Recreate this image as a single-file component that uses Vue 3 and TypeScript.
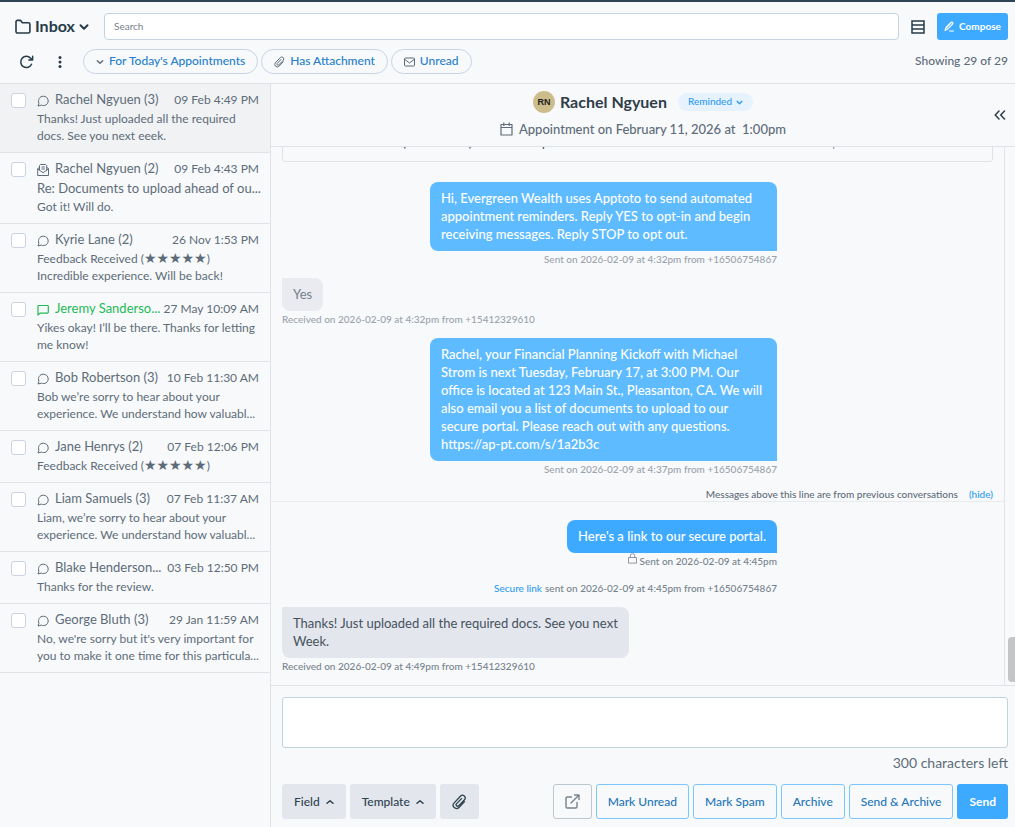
<script setup lang="ts">
import { nextTick, onMounted, ref } from 'vue'

type IconKind = 'chat' | 'mail' | 'sms'

interface Conversation {
  name: string
  date: string
  icon: IconKind
  subject?: string
  rating?: string
  preview: string
  active?: boolean
  unread?: boolean
}

const conversations = ref<Conversation[]>([
  { name: 'Rachel Ngyuen (3)', date: '09 Feb 4:49 PM', icon: 'chat', preview: 'Thanks! Just uploaded all the required\ndocs. See you next eeek.', active: true },
  { name: 'Rachel Ngyuen (2)', date: '09 Feb 4:43 PM', icon: 'mail', subject: 'Re: Documents to upload ahead of ou...', preview: 'Got it! Will do.' },
  { name: 'Kyrie Lane (2)', date: '26 Nov 1:53 PM', icon: 'chat', rating: '★★★★★', preview: 'Incredible experience. Will be back!' },
  { name: 'Jeremy Sanderso...', date: '27 May 10:09 AM', icon: 'sms', preview: 'Yikes okay! I’ll be there. Thanks for letting\nme know!', unread: true },
  { name: 'Bob Robertson (3)', date: '10 Feb 11:30 AM', icon: 'chat', preview: 'Bob we’re sorry to hear about your\nexperience. We understand how valuabl...' },
  { name: 'Jane Henrys (2)', date: '07 Feb 12:06 PM', icon: 'chat', rating: '★★★★★', preview: '' },
  { name: 'Liam Samuels (3)', date: '07 Feb 11:37 AM', icon: 'chat', preview: 'Liam, we’re sorry to hear about your\nexperience. We understand how valuabl...' },
  { name: 'Blake Henderson...', date: '03 Feb 12:50 PM', icon: 'chat', preview: 'Thanks for the review.' },
  { name: 'George Bluth (3)', date: '29 Jan 11:59 AM', icon: 'chat', preview: "No, we're sorry but it's very important for\nyou to make it one time for this particula..." },
])

const search = ref('')
const draft = ref('')
const thread = ref<HTMLElement | null>(null)

onMounted(async () => {
  await nextTick()
  if (thread.value) thread.value.scrollTop = thread.value.scrollHeight
})
</script>

<template>
  <div class="app">
    <header class="topbar">
      <div class="row search-row">
        <button class="plain inbox" type="button">
          <svg width="16" height="16" viewBox="0 0 16 16" fill="none" stroke="currentColor" stroke-width="1.6" stroke-linejoin="round"><path d="M1 12.6V2.8C1 2 1.6 1.4 2.4 1.4h3.2l1.800 2.400h6c.8 0 1.500.6 1.500 1.400v7.400c0 .8-.7 1.400-1.500 1.400h-11C1.600 14 1 13.400 1 12.600z" /></svg>
          <span>Inbox</span>
          <svg width="10" height="10" viewBox="0 0 10 10" fill="none" stroke="currentColor" stroke-width="2" stroke-linecap="round" stroke-linejoin="round"><path d="M1.500 3.200 5 6.700l3.500-3.500" /></svg>
        </button>
        <input v-model="search" class="search" type="text" placeholder="Search" aria-label="Search" />
        <button class="plain layout" type="button" aria-label="Change layout">
          <svg width="14" height="14" viewBox="0 0 14 14" fill="none" stroke="currentColor" stroke-width="1.500"><path d="M1 1h12v12H1zM1 5h12M1 9h12" /></svg>
        </button>
        <button class="compose" type="button">
          <svg width="11" height="11" viewBox="0 0 11 11" fill="none" stroke="currentColor" stroke-width="1.100" stroke-linecap="round" stroke-linejoin="round"><path d="M1 9.500 2 6.500 7 1.500c.500-.5 1.100-.5 1.600 0s.5 1.100 0 1.600L3.600 8.100zM2.200 6.800l4.900-4.900M5.500 10h4" /></svg>
          <span>Compose</span>
        </button>
      </div>
      <div class="row filter-row">
        <button class="plain tool" type="button" aria-label="Refresh">
          <svg width="15" height="14" viewBox="0 0 15 14" fill="none" stroke="currentColor" stroke-width="1.500" stroke-linecap="round" stroke-linejoin="round"><path d="M12.500 9.200A5.600 5.600 0 1 1 11.600 3.300L13.400 5M13.600 1.300V5.100H9.800" /></svg>
        </button>
        <button class="plain tool more" type="button" aria-label="More">
          <svg width="4" height="14" viewBox="0 0 4 14" fill="currentColor"><circle cx="2" cy="2.500" r="1.500" /><circle cx="2" cy="7" r="1.500" /><circle cx="2" cy="11.500" r="1.500" /></svg>
        </button>
        <div class="pills">
          <button class="pill" type="button">
            <svg width="8" height="8" viewBox="0 0 8 8" fill="none" stroke="currentColor" stroke-width="1.400" stroke-linecap="round" stroke-linejoin="round"><path d="M1.300 2.700 4 5.300l2.700-2.600" /></svg>
            <span>For Today's Appointments</span>
          </button>
          <button class="pill" type="button">
            <svg width="11" height="12" viewBox="0 0 22 24" fill="none" stroke="currentColor" stroke-width="2" stroke-linecap="round" stroke-linejoin="round"><path d="M18.500 11.500 10.200 20.300a5 5 0 0 1-7.200-7L12.700 3.100a4 4 0 0 1 5.800 5.500L9.600 17.800a2.200 2.200 0 0 1-3.200-3L14 6.900" /></svg>
            <span>Has Attachment</span>
          </button>
          <button class="pill" type="button">
            <svg width="11" height="10" viewBox="0 0 11 10" fill="none" stroke="currentColor"><rect x=".5" y="1" width="10" height="8" rx="1" /><path d="m1 2.500 4.500 3.500L10 2.500" /></svg>
            <span>Unread</span>
          </button>
        </div>
        <span class="count">Showing 29 of 29</span>
      </div>
    </header>

    <main class="body">
      <ul class="list">
        <li v-for="(c, i) in conversations" :key="i" class="item" :class="{ active: c.active, unread: c.unread }">
          <input class="check" type="checkbox" :aria-label="'Select ' + c.name" />
          <div class="item-body">
            <div class="item-head">
              <svg v-if="c.icon === 'chat'" class="kind" width="12" height="12" viewBox="0 0 12 12" fill="none" stroke="currentColor" stroke-linejoin="round"><path d="M1 11 1.900 8.300C.7 4.600 2.600 1.300 6.300 1.200c2.800 0 4.900 2 4.900 4.700 0 3.500-3.500 5.700-6.900 4.200z" /></svg>
              <svg v-else-if="c.icon === 'mail'" class="kind" width="12" height="12" viewBox="0 0 12 12" fill="none" stroke="currentColor" stroke-linejoin="round"><path d="M2.500 3.500.7 4.500v7h10.800v-7L9.700 3.500M.7 5l5.400 3.700L11.500 5M2.500 6V1.500l1-1h5.200l1 1V6M4.500 3h3.300M4.500 5h3.300" /></svg>
              <svg v-else class="kind" width="12" height="12" viewBox="0 0 12 12" fill="none" stroke="currentColor" stroke-width="1.200" stroke-linejoin="round"><path d="M1 11V2.300c0-.5.3-.8.8-.8h8.700c.5 0 .8.3.8.8v6c0 .5-.3.8-.8.800H3z" /></svg>
              <span class="name">{{ c.name }}</span>
              <time class="date">{{ c.date }}</time>
            </div>
            <p v-if="c.subject" class="subject">{{ c.subject }}</p>
            <p v-if="c.rating">Feedback Received (<span class="stars">{{ c.rating }}</span>)</p>
            <p v-if="c.preview" class="preview">{{ c.preview }}</p>
          </div>
        </li>
      </ul>

      <section class="conversation">
        <div class="conv-head">
          <div class="conv-info">
            <div class="person">
              <span class="avatar">RN</span>
              <h1>Rachel Ngyuen</h1>
              <button class="status" type="button">
                <span>Reminded</span>
                <svg width="7" height="7" viewBox="0 0 8 8" fill="none" stroke="currentColor" stroke-width="1.600" stroke-linecap="round" stroke-linejoin="round"><path d="M1.300 2.700 4 5.300l2.700-2.600" /></svg>
              </button>
            </div>
            <div class="appointment">
              <svg width="13" height="14" viewBox="0 0 13 14" fill="none" stroke="currentColor" stroke-width="1.200" stroke-linejoin="round"><path d="M1 2.500h11V13H1zM1 5.500h11M3.800.5v3.500M9.200.5v3.500" /></svg>
              <span>Appointment on February 11, 2026 at &nbsp;1:00pm</span>
            </div>
          </div>
          <button class="plain collapse" type="button" aria-label="Expand details">
            <svg width="12" height="10" viewBox="0 0 12 10" fill="none" stroke="currentColor" stroke-width="1.500" stroke-linecap="round" stroke-linejoin="round"><path d="M5 1 1.200 5 5 9M10.500 1 6.700 5l3.800 4" /></svg>
          </button>
        </div>

        <div class="thread-wrap">
          <div ref="thread" class="thread">
            <div class="event">
              <span>Feedback Received (<span class="stars">★★★★★</span>) Incredible experience. Will be back!</span>
              <span class="event-meta">Received on 2026-02-09 at 4:31pm from +15412329610</span>
            </div>

            <div class="msg sent old">
              <p class="bubble">Hi, Evergreen Wealth uses Apptoto to send automated<br />appointment reminders. Reply YES to opt-in and begin<br />receiving messages. Reply STOP to opt out.</p>
              <small>Sent on 2026-02-09 at 4:32pm from +16506754867</small>
            </div>
            <div class="msg received old">
              <p class="bubble">Yes</p>
              <small>Received on 2026-02-09 at 4:32pm from +15412329610</small>
            </div>
            <div class="msg sent old">
              <p class="bubble">Rachel, your Financial Planning Kickoff with Michael<br />Strom is next Tuesday, February 17, at 3:00 PM. Our<br />office is located at 123 Main St., Pleasanton, CA. We will<br />also email you a list of documents to upload to our<br />secure portal. Please reach out with any questions.<br />https://ap-pt.com/s/1a2b3c</p>
              <small>Sent on 2026-02-09 at 4:37pm from +16506754867</small>
            </div>
            <div class="divider">
              <span>Messages above this line are from previous conversations</span>
              <a href="#">(hide)</a>
            </div>
            <div class="msg sent current">
              <p class="bubble">Here's a link to our secure portal.</p>
              <small>
                <svg width="9" height="11" viewBox="0 0 9 11" fill="none" stroke="currentColor" stroke-width=".8"><path d="M.5 4.500h8v5.600h-8zM2.300 4.500V2.800a2.200 2.200 0 0 1 4.400 0v1.700" /></svg>
                Sent on 2026-02-09 at 4:45pm
              </small>
            </div>
            <div class="msg sent">
              <small><a href="#">Secure link</a> sent on 2026-02-09 at 4:45pm from +16506754867</small>
            </div>
            <div class="msg received">
              <p class="bubble">Thanks! Just uploaded all the required docs. See you next<br />Week.</p>
              <small>Received on 2026-02-09 at 4:49pm from +15412329610</small>
            </div>
          </div>
          <div class="track"><div class="thumb"></div></div>
        </div>

        <form class="composer" @submit.prevent>
          <textarea v-model="draft" aria-label="Message"></textarea>
          <div class="chars">300 characters left</div>
          <div class="actions">
            <button class="btn grey" type="button">
              <span>Field</span>
              <svg width="8" height="8" viewBox="0 0 8 8" fill="none" stroke="currentColor" stroke-width="1.500" stroke-linecap="round" stroke-linejoin="round"><path d="M1 5.300 4 2.700l3 2.600" /></svg>
            </button>
            <button class="btn grey" type="button">
              <span>Template</span>
              <svg width="8" height="8" viewBox="0 0 8 8" fill="none" stroke="currentColor" stroke-width="1.500" stroke-linecap="round" stroke-linejoin="round"><path d="M1 5.300 4 2.700l3 2.600" /></svg>
            </button>
            <button class="btn grey" type="button" aria-label="Attach file">
              <svg width="15" height="16" viewBox="0 0 22 24" fill="none" stroke="currentColor" stroke-width="2" stroke-linecap="round" stroke-linejoin="round"><path d="M18.500 11.500 10.200 20.300a5 5 0 0 1-7.200-7L12.700 3.100a4 4 0 0 1 5.800 5.500L9.600 17.800a2.200 2.200 0 0 1-3.200-3L14 6.900" /></svg>
            </button>
            <span class="spacer"></span>
            <button class="btn open" type="button" aria-label="Open in new window">
              <svg width="15" height="15" viewBox="0 0 15 15" fill="none" stroke="currentColor" stroke-width="1.400" stroke-linecap="round" stroke-linejoin="round"><path d="M6.500 3H2.300C1.500 3 1 3.500 1 4.300v8.400c0 .8.500 1.300 1.300 1.300h8.400c.8 0 1.300-.5 1.300-1.300V8.500M6 9l7.500-7.500M9.500 1H14v4.500" /></svg>
            </button>
            <button class="btn outline" type="button">Mark Unread</button>
            <button class="btn outline" type="button">Mark Spam</button>
            <button class="btn outline" type="button">Archive</button>
            <button class="btn outline" type="button">Send &amp; Archive</button>
            <button class="btn primary" type="submit">Send</button>
          </div>
        </form>
      </section>
    </main>
  </div>
</template>

<style>
body {
  margin: 0;
  background: #f8f9fb;
}
</style>

<style scoped>
.app {
  box-sizing: border-box;
  height: 100vh;
  display: flex;
  flex-direction: column;
  border-top: 2px solid #2e4553;
  background: #f8f9fb;
  color: #5d6c78;
  font-family: Lato, "DejaVu Sans", sans-serif;
  font-size: 13px;
}
.app *,
.app *::before {
  box-sizing: border-box;
}
button,
input,
textarea {
  font-family: inherit;
}
button {
  cursor: pointer;
}
svg {
  flex: none;
  display: block;
}
p,
h1 {
  margin: 0;
}
a {
  color: #2c9bf0;
  text-decoration: none;
}
.plain {
  display: flex;
  align-items: center;
  padding: 0;
  border: 0;
  background: none;
  color: #263c4a;
}
.topbar {
  flex: none;
  border-bottom: 1px solid #dfe3e7;
}
.row {
  display: flex;
  align-items: center;
}
.search-row {
  padding: 11px 7px 0 15px;
}
.inbox {
  width: 89px;
  gap: 4px;
  font-size: 16px;
  font-weight: 700;
}
.inbox span,
.pill span,
.compose span,
.status span,
.count,
h1,
.name,
.date {
  padding-bottom: 2px;
}
.search {
  flex: 1;
  min-width: 0;
  height: 27px;
  padding: 0 9px 2px;
  border: 1px solid #c5d3e0;
  border-radius: 4px;
  background: #fff;
  font-size: 10px;
  color: #33424e;
}
.search::placeholder {
  color: #76828c;
  opacity: 1;
}
.layout {
  margin: 0 12px;
}
.compose {
  display: flex;
  align-items: center;
  justify-content: center;
  gap: 4px;
  width: 71px;
  height: 27px;
  padding: 0;
  border: 0;
  border-radius: 3px;
  background: #3eaaff;
  color: #fff;
  font-size: 10px;
  font-weight: 700;
}
.filter-row {
  padding: 9px 7px 9px 19px;
}
.tool {
  width: 39px;
}
.more {
  width: 25px;
}
.pills {
  display: flex;
  flex: 1;
  gap: 3px;
}
.pill {
  display: flex;
  align-items: center;
  gap: 5px;
  height: 25px;
  padding: 0 12px;
  border: 1px solid #c8d4e6;
  border-radius: 13px;
  background: transparent;
  color: #5d6c78;
  font-size: 12px;
  font-weight: 500;
}
.pill span {
  color: #2580cb;
}
.count {
  font-size: 12px;
  font-weight: 500;
}
.body {
  flex: 1;
  min-height: 0;
  display: flex;
}
.list {
  flex: none;
  width: 271px;
  margin: 0;
  padding: 0;
  list-style: none;
  border-right: 1px solid #dfe3e7;
}
.item {
  display: flex;
  gap: 11px;
  padding: 7px 11px 8px;
  border-bottom: 1px solid #dfe3e7;
}
.item.active {
  background: #f1f2f4;
}
.check {
  appearance: none;
  flex: none;
  width: 15px;
  height: 15px;
  margin: 2px 0 0;
  border: 1px solid #c9d3e2;
  border-radius: 3px;
  background: #fff;
}
.item-body {
  flex: 1;
  min-width: 0;
  font-size: 12px;
  line-height: 17px;
  white-space: nowrap;
}
.item-head {
  display: flex;
  align-items: center;
  height: 19px;
}
.kind {
  margin-right: 6px;
}
.name {
  flex: 1;
  font-size: 13px;
}
.subject {
  font-size: 13px;
  line-height: 19px;
}
.preview {
  white-space: pre;
}
.stars {
  font-family: "DejaVu Sans", sans-serif;
  font-size: 14px;
  line-height: 1;
}
.unread .kind,
.unread .name {
  color: #22b957;
}
.conversation {
  flex: 1;
  min-width: 0;
  display: flex;
  flex-direction: column;
}
.conv-head {
  flex: none;
  display: flex;
  align-items: center;
  height: 63px;
  padding-right: 9px;
  border-bottom: 1px solid #dfe3e7;
}
.conv-info {
  flex: 1;
  padding-left: 21px;
}
.person,
.appointment {
  display: flex;
  align-items: center;
  justify-content: center;
}
.person {
  height: 28px;
}
.appointment {
  height: 26px;
  gap: 6px;
  font-size: 13px;
  font-weight: 500;
}
.avatar {
  width: 22px;
  height: 22px;
  border-radius: 50%;
  background: #cdbc8c;
  color: #1d1d1d;
  font: 700 9px/22px "Liberation Sans", sans-serif;
  text-align: center;
}
h1 {
  margin: 0 11px 0 5px;
  color: #2f3d49;
  font-size: 16px;
  font-weight: 700;
}
.status {
  display: flex;
  align-items: center;
  gap: 4px;
  height: 18px;
  padding: 0 10px;
  border: 0;
  border-radius: 9px;
  background: #e6f2fd;
  color: #2c9bf0;
  font-size: 10px;
  font-weight: 500;
}
.collapse {
  color: #2f3d49;
}
.thread-wrap {
  flex: 1;
  min-height: 0;
  display: flex;
  border-bottom: 1px solid #dfe3e7;
}
.thread {
  flex: 1;
  overflow: hidden;
  display: flex;
  flex-direction: column;
  justify-content: flex-end;
  gap: 11px;
  padding: 0 11px 11px;
  border-right: 1px solid #e1e4e8;
}
.track {
  width: 10px;
  display: flex;
  align-items: flex-end;
  justify-content: flex-end;
  padding-bottom: 3px;
}
.thumb {
  width: 7px;
  height: 45px;
  border-radius: 4px 0 0 4px;
  background: #c3c5c7;
}
.event {
  flex: none;
  display: flex;
  align-items: baseline;
  justify-content: space-between;
  margin-bottom: 9px;
  padding: 10px 50px 10px 16px;
  border: 1px solid #dfe3e7;
  border-radius: 3px;
  color: #33424e;
  font-size: 12px;
  line-height: 16px;
}
.event-meta {
  color: #76828c;
  font-size: 10px;
}
.msg {
  flex: none;
  display: flex;
  flex-direction: column;
}
.sent {
  width: 495px;
  align-items: flex-end;
}
.received {
  align-items: flex-start;
}
.bubble {
  padding: 7px 11px 8px;
  border-radius: 8px 8px 0 8px;
  background: #3eaaff;
  color: #fff;
  font-size: 13px;
  font-weight: 500;
  line-height: 18px;
}
.sent.old .bubble {
  width: 347px;
  background: #5ebbff;
}
.received .bubble {
  border-radius: 0 8px 8px 8px;
  background: #e3e6ec;
  color: #45525e;
  font-weight: 400;
}
.received.old .bubble {
  background: #e9ebf1;
  color: #747f8a;
}
small {
  display: flex;
  gap: 3px;
  font-size: 10px;
  font-weight: 500;
  line-height: 16px;
  color: #76828c;
}
.old small {
  color: #9aa3ab;
}
.divider {
  flex: none;
  display: flex;
  justify-content: flex-end;
  gap: 11px;
  margin: 0 -11px 7px;
  padding: 0 11px;
  border-bottom: 1px solid #e8ebee;
  font-size: 10px;
  font-weight: 500;
  line-height: 13px;
}
.composer {
  flex: none;
  padding: 11px 7px 8px 11px;
}
textarea {
  display: block;
  width: 100%;
  height: 51px;
  border: 1px solid #bfd4e2;
  border-radius: 3px;
  background: #fff;
  resize: none;
}
.chars {
  padding-top: 5px;
  font-size: 14px;
  line-height: 20px;
  text-align: right;
}
.actions {
  display: flex;
  gap: 4px;
  padding-top: 11px;
}
.btn {
  display: flex;
  align-items: center;
  justify-content: center;
  gap: 6px;
  height: 35px;
  padding: 0 11px;
  border: 1px solid transparent;
  border-radius: 3px;
  background: transparent;
  font-size: 12px;
  font-weight: 500;
}
.grey {
  background: #e3e6ec;
  color: #2f4250;
}
.spacer {
  flex: 1;
}
.open {
  border-color: #bcc6cd;
  color: #76828c;
}
.outline {
  border-color: #7cc6ff;
  color: #2376b8;
}
.primary {
  background: #3eaaff;
  color: #fff;
  font-weight: 700;
}
</style>
